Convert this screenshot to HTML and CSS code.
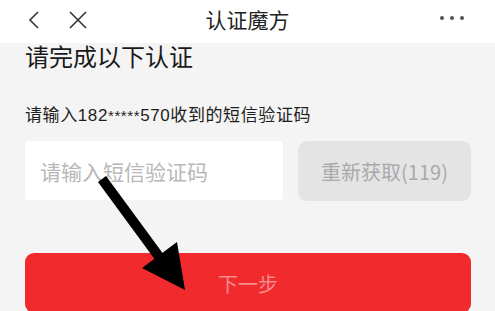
FILE: index.html
```
<!DOCTYPE html>
<html>
<head>
    <meta charset="utf-8">
    <title>认证魔方</title>
    <link rel="stylesheet" href="styles.css">
</head>
<body>
    <div class="topbar">
        <div class="nav-left">
            <svg class="icon" width="16" height="20" viewBox="0 0 16 20">
                <path d="M12 2 L4 10 L12 18" fill="none" stroke="#333" stroke-width="1.6"/>
            </svg>
            <svg class="icon" width="20" height="20" viewBox="0 0 20 20">
                <path d="M2 2 L18 18 M18 2 L2 18" fill="none" stroke="#333" stroke-width="1.6"/>
            </svg>
        </div>
        <div class="title">认证魔方</div>
        <div class="nav-right">
            <span class="dot"></span><span class="dot"></span><span class="dot"></span>
        </div>
    </div>

    <div class="content">
        <h1 class="heading">请完成以下认证</h1>
        <p class="label">请输入182<span class="stars">*****</span>570收到的短信验证码</p>
        <div class="code-row">
            <div class="code-input">请输入短信验证码</div>
            <div class="resend">重新获取(119)</div>
        </div>
        <div class="next">下一步</div>
    </div>

    <svg class="arrow" width="495" height="311" viewBox="0 0 495 311">
        <line x1="102" y1="179" x2="160" y2="258" stroke="#000" stroke-width="10"/>
        <polygon points="142,268 177,242 185,290" fill="#000"/>
    </svg>
</body>
</html>
```

FILE: styles.css
```
html,
body {
    margin: 0;
    padding: 0;
    width: 100%;
    height: 100%;
    overflow: hidden;
    background-color: #f4f4f4;
    font-family: "Noto Sans CJK SC", "Noto Sans", sans-serif;
}

.topbar {
    height: 43px;
    background-color: #fff;
    display: flex;
    align-items: center;
    justify-content: space-between;
    padding: 0 31px 0 26px;
    position: relative;
}

.nav-left {
    display: flex;
    align-items: center;
    gap: 26px;
    margin-top: -4px;
}

.title {
    position: absolute;
    left: 0;
    right: 0;
    text-align: center;
    font-size: 21px;
    color: #222;
    margin-top: -6px;
    pointer-events: none;
}

.nav-right {
    display: flex;
    gap: 6px;
    margin-top: -8px;
}

.dot {
    width: 4px;
    height: 4px;
    border-radius: 50%;
    background-color: #555;
}

.content {
    padding: 0 24px 0 25px;
}

.heading {
    margin: -2px 0 0;
    font-size: 24px;
    font-weight: normal;
    line-height: 30px;
    color: #1a1a1a;
}

.label {
    margin: 34px 0 0;
    font-size: 17px;
    line-height: 22px;
    letter-spacing: 0.6px;
    color: #1e1e1e;
    font-family: "Liberation Sans", "Noto Sans CJK SC", sans-serif;
}

.stars {
    font-size: 15px;
}

.code-row {
    display: flex;
    gap: 15px;
    margin-top: 14px;
}

.code-input {
    width: 258px;
    height: 59px;
    background-color: #fff;
    border-radius: 3px;
    box-sizing: border-box;
    padding-left: 15px;
    display: flex;
    align-items: center;
    font-size: 21px;
    color: #b8b8b8;
}

.resend {
    flex: 1;
    height: 60px;
    background-color: #e4e4e4;
    border-radius: 9px;
    display: flex;
    align-items: center;
    justify-content: center;
    font-size: 20px;
    color: #a9a9a9;
}

.next {
    margin-top: 52px;
    height: 60px;
    background-color: #f12a2d;
    border-radius: 9px;
    display: flex;
    align-items: center;
    justify-content: center;
    font-size: 20px;
    color: #f78c8c;
}

.arrow {
    position: absolute;
    left: 0;
    top: 0;
    pointer-events: none;
}
```
